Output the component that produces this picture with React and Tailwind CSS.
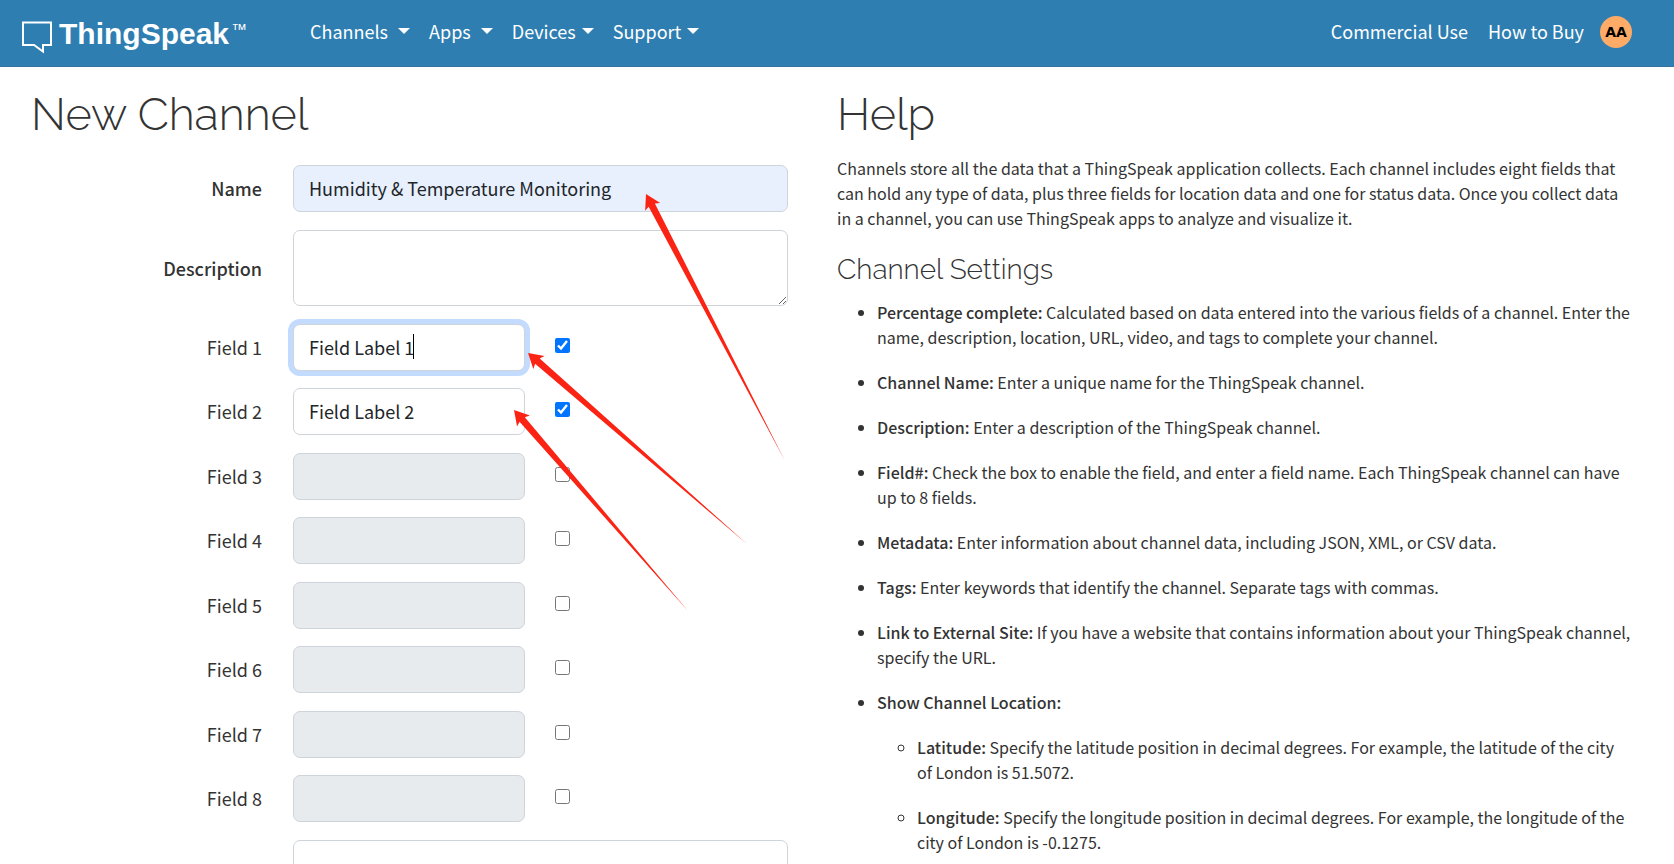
const menus = [
  { label: 'Channels', wide: true },
  { label: 'Apps', wide: true },
  { label: 'Devices' },
  { label: 'Support' },
];

const fields = [
  { n: 1, value: 'Field Label 1', on: true, active: true },
  { n: 2, value: 'Field Label 2', on: true },
  { n: 3 },
  { n: 4 },
  { n: 5 },
  { n: 6 },
  { n: 7 },
  { n: 8 },
];

const settings = [
  ['Percentage complete:', 'Calculated based on data entered into the various fields of a channel. Enter the name, description, location, URL, video, and tags to complete your channel.'],
  ['Channel Name:', 'Enter a unique name for the ThingSpeak channel.'],
  ['Description:', 'Enter a description of the ThingSpeak channel.'],
  ['Field#:', 'Check the box to enable the field, and enter a field name. Each ThingSpeak channel can have up to 8 fields.'],
  ['Metadata:', 'Enter information about channel data, including JSON, XML, or CSV data.'],
  ['Tags:', 'Enter keywords that identify the channel. Separate tags with commas.'],
  ['Link to External Site:', 'If you have a website that contains information about your ThingSpeak channel, specify the URL.'],
];

const location = [
  ['Latitude:', 'Specify the latitude position in decimal degrees. For example, the latitude of the city of London is 51.5072.'],
  ['Longitude:', 'Specify the longitude position in decimal degrees. For example, the longitude of the city of London is -0.1275.'],
];

const control = 'rounded-[7px] border border-[#ced4da] px-[15px] pb-[9px] pt-2 text-[18px] leading-[28px] text-[#212529] outline-none';

function Header() {
  return (
    <header className="flex h-[67px] items-center border-b border-[#36749f] bg-[#2e7eb2] pb-[2px] pl-[22px] pr-[42px] text-[18px] text-white">
      <a href="#home" className="flex items-center" aria-label="ThingSpeak home">
        <svg width="31" height="33" viewBox="0 0 31 33" fill="none" stroke="currentColor" strokeWidth="2" className="mt-[10px]">
          <path d="M1 1.5H29V24H21V30.5L12 24H1Z" />
        </svg>
        <span className="ml-[6px] mt-1 font-['Liberation_Sans',sans-serif] text-[30px] font-bold leading-none">ThingSpeak</span>
        <span className="mb-1 ml-[2px] font-['Liberation_Sans',sans-serif] text-[16px] leading-none">™</span>
      </a>
      <nav className="ml-[63px] flex items-center gap-[19px] pb-[2px]">
        {menus.map((m) => (
          <button key={m.label} type="button" className={`flex items-center ${m.wide ? 'gap-[10px]' : 'gap-[6px]'}`}>
            {m.label}
            <svg width="12" height="6" viewBox="0 0 12 6" fill="currentColor">
              <path d="M0 0H12L6 6Z" />
            </svg>
          </button>
        ))}
      </nav>
      <div className="ml-auto flex items-center gap-5 pb-[2px]">
        <a href="#commercial">Commercial Use</a>
        <a href="#buy">How to Buy</a>
      </div>
      <button type="button" className="ml-4 flex size-8 items-center justify-center rounded-full bg-[#fdab66] font-['DejaVu_Sans',sans-serif] text-[14px] font-bold text-black">
        AA
      </button>
    </header>
  );
}

function Row({ id, label, bold, children }) {
  return (
    <div className="flex items-center gap-[31px]">
      <label htmlFor={id} className={`w-[231px] shrink-0 text-right text-[18px] ${bold ? 'font-medium' : ''}`}>
        {label}
      </label>
      <div className="flex min-w-0 flex-1 items-center">{children}</div>
    </div>
  );
}

function Field({ n, value, on, active }) {
  const id = `field-${n}`;
  return (
    <Row id={id} label={`Field ${n}`}>
      <div className="relative flex">
        <input
          id={id}
          type="text"
          defaultValue={value}
          disabled={!on}
          className={`w-[232px] ${control} ${active ? 'border-[#86b7fe] shadow-[0_0_0_5px_#c2dbfe]' : ''} ${on ? 'bg-white' : 'bg-[#e7ebee]'}`}
        />
        {active && <span className="absolute left-[120px] top-[10px] h-[25px] w-px bg-black" />}
      </div>
      <input type="checkbox" aria-label={`Enable field ${n}`} defaultChecked={on} className="mb-1 ml-[30px] size-[15px]" />
    </Row>
  );
}

function Arrow({ x, y, tx, ty }) {
  const length = Math.hypot(tx - x, ty - y);
  const angle = (Math.atan2(ty - y, tx - x) * 180) / Math.PI;
  return (
    <path
      d={`M0 0L14.5 8.5L12.5 3.5L${length} 0L12.5 -3.5L14.5 -8.5Z`}
      transform={`translate(${x} ${y}) rotate(${angle})`}
    />
  );
}

function Term({ item }) {
  return (
    <li>
      <strong className="font-medium">{item[0]}</strong> {item[1]}
    </li>
  );
}

export default function App() {
  return (
    <div className="relative h-screen overflow-hidden bg-white font-['Noto_Sans_CJK_SC',sans-serif] text-[#333]">
      <Header />
      <main className="grid grid-cols-2 px-[31px]">
        <section className="pr-[49px] pt-[22px]">
          <h1 className="font-['Raleway','Lato',sans-serif] text-[45px] font-light leading-[52px]">New Channel</h1>
          <form className="mt-6 flex flex-col gap-[18px]">
            <Row id="name" label="Name" bold>
              <input id="name" type="text" defaultValue="Humidity & Temperature Monitoring" className={`w-full bg-[#e8f0fe] ${control}`} />
            </Row>
            <Row id="description" label="Description" bold>
              <textarea id="description" className={`block h-[76px] w-full resize-y ${control}`} />
            </Row>
            <div className="flex h-[498px] flex-col justify-between">
              {fields.map((f) => (
                <Field key={f.n} {...f} />
              ))}
            </div>
            <Row id="metadata" label="">
              <textarea id="metadata" aria-label="Metadata" className={`block h-[76px] w-full resize-y ${control}`} />
            </Row>
          </form>
        </section>
        <section className="pr-3 pt-[22px] text-[16px] leading-[25px]">
          <h1 className="font-['Raleway','Lato',sans-serif] text-[45px] font-light leading-[52px]">Help</h1>
          <p className="mt-[15px]">
            Channels store all the data that a ThingSpeak application collects. Each channel includes eight fields that can hold any type of data, plus three fields for location data and one for status data. Once you collect data in a channel, you can use ThingSpeak apps to analyze and visualize it.
          </p>
          <h2 className="mt-[24px] font-['Raleway','Lato',sans-serif] text-[28px] font-light leading-[30px]">Channel Settings</h2>
          <ul className="mt-[15px] flex list-disc flex-col gap-5 pl-10">
            {settings.map((s) => (
              <Term key={s[0]} item={s} />
            ))}
            <li>
              <strong className="font-medium">Show Channel Location:</strong>
              <ul className="mt-5 flex list-[circle] flex-col gap-5 pl-10">
                {location.map((s) => (
                  <Term key={s[0]} item={s} />
                ))}
              </ul>
            </li>
          </ul>
        </section>
      </main>
      <svg className="pointer-events-none absolute left-0 top-0" width="800" height="640" viewBox="0 0 800 640" fill="#fb2414" aria-hidden="true">
        <Arrow x={646} y={194} tx={785} ty={461} />
        <Arrow x={528} y={353} tx={747} ty={544} />
        <Arrow x={514} y={410} tx={688} ty={611} />
      </svg>
    </div>
  );
}
